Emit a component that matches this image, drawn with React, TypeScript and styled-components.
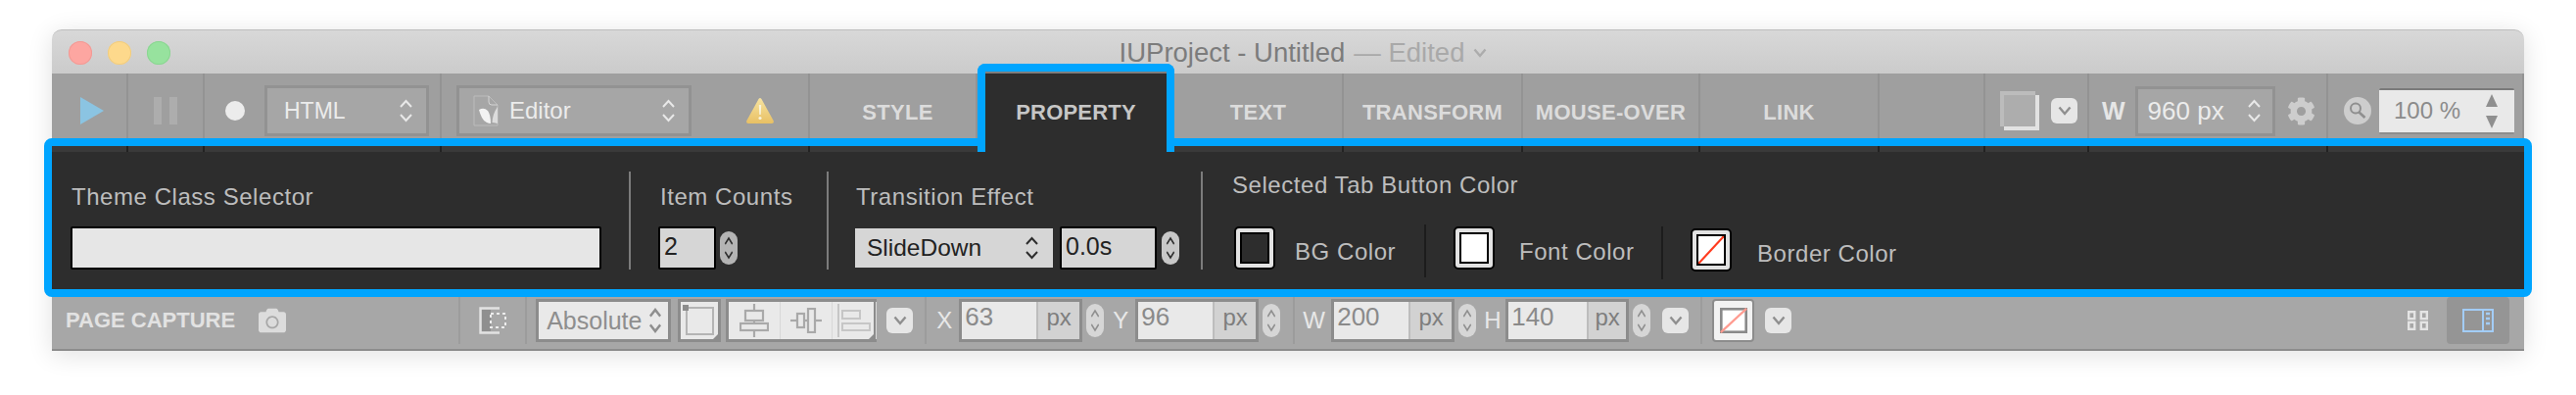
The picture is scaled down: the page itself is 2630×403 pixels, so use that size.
import React from "react";
import styled, { createGlobalStyle } from "styled-components";
import { FaCog, FaCamera } from "react-icons/fa";

const GlobalStyle = createGlobalStyle`
	html, body {
		margin: 0;
		background: #ffffff;
		font-family: "Liberation Sans", Arial, sans-serif;
	}
`;

const Page = styled.div`
	width: 2630px;
	height: 403px;
	overflow: hidden;
	box-sizing: border-box;
	padding: 30px 0 0 53px;
`;

const Window = styled.div`
	width: 2524px;
	height: 328px;
	border-radius: 10px 10px 0 0;
	box-shadow: 0 4px 26px rgba(0, 0, 0, 0.12);
`;

const TitleBar = styled.div`
	height: 45px;
	box-sizing: border-box;
	display: grid;
	grid-template-columns: 1fr auto 1fr;
	align-items: center;
	padding: 2px 0 0 17px;
	border-radius: 10px 10px 0 0;
	border-top: 1px solid #bdbdbd;
	background: linear-gradient(#d8d8d8, #cbcbcb);
`;

const Lights = styled.div`
	display: flex;
	gap: 16px;
`;

const Light = styled.div<{ $color: string; $edge: string }>`
	width: 24px;
	height: 24px;
	border-radius: 50%;
	background: ${(p) => p.$color};
	box-shadow: inset 0 0 0 1px ${(p) => p.$edge};
`;

const Title = styled.div`
	display: flex;
	align-items: center;
	margin-left: 14px;
	font-size: 27.5px;
	color: #7c7c7c;
	white-space: nowrap;
`;

const Edited = styled.span`
	color: #a9a9a9;
	margin-left: 9px;
`;

const TopBar = styled.div`
	height: 66px;
	display: flex;
	background: #9f9f9f;
`;

const Cell = styled.div<{ $w: number }>`
	width: ${(p) => p.$w}px;
	flex: none;
	height: 66px;
	box-sizing: border-box;
	display: flex;
	align-items: center;
	padding-top: 10px;
	border-right: 2px solid #939393;
`;

const CenterCell = styled(Cell)`
	justify-content: center;
`;

const Tab = styled(CenterCell)<{ $shift?: number }>`
	padding-top: 14px;
	padding-left: ${(p) => p.$shift ?? 0}px;
	font-size: 22px;
	font-weight: 700;
	letter-spacing: 0.3px;
	color: #dcdcdc;
`;

const ActiveTab = styled.div`
	position: relative;
	z-index: 2;
	flex: none;
	width: 201px;
	height: 90px;
	margin-top: -10px;
	box-sizing: border-box;
	display: flex;
	justify-content: center;
	padding-top: 29px;
	border: 8px solid #00a5ff;
	border-bottom: none;
	border-radius: 8px 8px 0 0;
	background: #2d2d2d;
	box-shadow: inset 0 2px 0 #7d7d7d;
	font-size: 22px;
	font-weight: 700;
	letter-spacing: 0.2px;
	color: #c6c6c6;
`;

const DarkSelect = styled.div<{ $w: number; $ml: number; $size?: number; $pad?: number }>`
	width: ${(p) => p.$w}px;
	height: 52px;
	margin-left: ${(p) => p.$ml}px;
	flex: none;
	box-sizing: border-box;
	display: flex;
	align-items: center;
	justify-content: space-between;
	padding: 0 13px 0 ${(p) => p.$pad ?? 17}px;
	border: 3px solid #929292;
	background: #a6a6a6;
	font-size: ${(p) => p.$size ?? 23}px;
	color: #ececec;
`;

const SelectName = styled.div`
	display: flex;
	align-items: center;
	gap: 11px;
`;

const WidthField = styled(DarkSelect)`
	height: 51px;
	padding: 0 11px 0 10px;
	font-size: 26px;
`;

const FieldLetter = styled.div<{ $ml: number }>`
	margin-left: ${(p) => p.$ml}px;
	font-size: 25px;
	font-weight: 700;
	color: #e6e6e6;
`;

const ChevronButton = styled.div<{ $ml: number }>`
	width: 27px;
	height: 26px;
	margin-left: ${(p) => p.$ml}px;
	flex: none;
	border-radius: 6px;
	background: #e6e6e6;
	display: flex;
	align-items: center;
	justify-content: center;
`;

const IconSlot = styled.div<{ $ml: number }>`
	margin-left: ${(p) => p.$ml}px;
	flex: none;
	display: flex;
	align-items: center;
`;

const ZoomField = styled.div`
	width: 138px;
	height: 47px;
	margin-left: 8px;
	flex: none;
	box-sizing: border-box;
	display: flex;
	align-items: center;
	justify-content: space-between;
	padding: 0 17px 0 15px;
	border-radius: 2px;
	border-top: 2px solid #7a7a7a;
	border-bottom: 2px solid #8d8d8d;
	background: #e9e9e9;
	font-size: 24px;
	color: #8b8b8b;
`;

const ZoomArrows = styled.div`
	display: flex;
	flex-direction: column;
	gap: 9px;
`;

const Panel = styled.div`
	margin: 0 -8px;
	height: 162px;
	box-sizing: border-box;
	border: 8px solid #00a5ff;
	border-radius: 8px;
	background: #2d2d2d;
`;

const Strip = styled.div`
	height: 6px;
	display: flex;
	background: #3a3a3a;
`;

const Tick = styled.div<{ $w: number }>`
	width: ${(p) => p.$w}px;
	flex: none;
	box-sizing: border-box;
	border-right: 2px solid #222222;
`;

const PanelBody = styled.div`
	display: flex;
	height: 100px;
	margin-top: 20px;
	padding-left: 19px;
`;

const Section = styled.div<{ $ml?: number; $w: number }>`
	width: ${(p) => p.$w}px;
	margin-left: ${(p) => p.$ml ?? 0}px;
	flex: none;
`;

const Label = styled.div<{ $ml?: number }>`
	height: 56px;
	line-height: 52px;
	margin-left: ${(p) => p.$ml ?? 1}px;
	font-size: 24px;
	letter-spacing: 0.55px;
	color: #bdbdbd;
	white-space: nowrap;
`;

const RaisedLabel = styled(Label)`
	line-height: 28px;
`;

const Divider = styled.div<{ $ml: number }>`
	width: 2px;
	height: 100px;
	margin-left: ${(p) => p.$ml}px;
	flex: none;
	background: #7c7c7c;
`;

const Controls = styled.div`
	display: flex;
	align-items: center;
	height: 44px;
`;

const TextField = styled.div<{ $w: number; $ml?: number }>`
	width: ${(p) => p.$w}px;
	height: 44px;
	margin-left: ${(p) => p.$ml ?? 0}px;
	flex: none;
	box-sizing: border-box;
	display: flex;
	align-items: center;
	padding: 0 0 4px 4px;
	border: 2px solid #000000;
	border-radius: 2px;
	background: #d6d6d6;
	font-size: 25px;
	color: #222222;
`;

const WideField = styled(TextField)`
	background: #e6e6e6;
`;

const LightSelect = styled.div`
	width: 202px;
	height: 40px;
	flex: none;
	box-sizing: border-box;
	display: flex;
	align-items: center;
	justify-content: space-between;
	padding: 0 14px 0 12px;
	background: #d6d6d6;
	font-size: 24.5px;
	color: #222222;
`;

const Stepper = styled.div<{ $ml: number; $bg: string }>`
	width: 18px;
	height: 34px;
	margin-left: ${(p) => p.$ml}px;
	flex: none;
	border-radius: 9px;
	background: ${(p) => p.$bg};
	display: flex;
	align-items: center;
	justify-content: center;
`;

const ColorRow = styled.div`
	display: flex;
	align-items: flex-start;
	margin-top: -2px;
`;

const Swatch = styled.div<{ $mt?: number; $ml?: number }>`
	width: 42px;
	height: 44px;
	margin-top: ${(p) => p.$mt ?? 2}px;
	margin-left: ${(p) => p.$ml ?? 0}px;
	flex: none;
	box-sizing: border-box;
	padding: 4px;
	border: 2px solid #000000;
	border-radius: 5px;
	background: #e2e2e2;
`;

const SwatchFill = styled.div<{ $fill: string }>`
	height: 100%;
	box-sizing: border-box;
	border: 2px solid #000000;
	background: ${(p) => p.$fill};
`;

const SwatchLabel = styled.div<{ $ml: number; $mt: number; $w: number }>`
	width: ${(p) => p.$w}px;
	margin-left: ${(p) => p.$ml}px;
	margin-top: ${(p) => p.$mt}px;
	flex: none;
	line-height: 30px;
	font-size: 24px;
	letter-spacing: 0.55px;
	color: #bdbdbd;
	white-space: nowrap;
`;

const DarkDivider = styled.div<{ $ml: number; $mt: number }>`
	width: 2px;
	height: 54px;
	margin-left: ${(p) => p.$ml}px;
	margin-top: ${(p) => p.$mt}px;
	flex: none;
	background: #1c1c1c;
`;

const BottomBar = styled.div`
	height: 55px;
	box-sizing: border-box;
	display: flex;
	align-items: flex-start;
	justify-content: space-between;
	border-bottom: 2px solid #8c8c8c;
	background: #a7a7a7;
`;

const BottomGroup = styled.div`
	height: 48px;
	display: flex;
	align-items: center;
`;

const ViewGroup = styled(BottomGroup)`
	padding-right: 15px;
`;

const PageCapture = styled.div`
	margin-left: 14px;
	font-size: 22px;
	font-weight: 700;
	color: #e2e2e2;
	white-space: nowrap;
`;

const BottomDivider = styled.div<{ $ml: number }>`
	width: 2px;
	height: 48px;
	margin-left: ${(p) => p.$ml}px;
	flex: none;
	background: #9c9c9c;
`;

const Box = styled.div<{ $w: number; $ml: number }>`
	width: ${(p) => p.$w}px;
	height: 44px;
	margin-left: ${(p) => p.$ml}px;
	flex: none;
	box-sizing: border-box;
	border: 3px solid #8c8c8c;
	background: #e9e9e9;
`;

const PositionSelect = styled(Box)`
	display: flex;
	align-items: center;
	justify-content: space-between;
	padding: 0 6px 0 8px;
	font-size: 25px;
	color: #8e8e8e;
`;

const CornerBox = styled(Box)`
	position: relative;

	&::after {
		content: "";
		position: absolute;
		right: -1px;
		bottom: -1px;
		border-style: solid;
		border-width: 0 0 7px 7px;
		border-color: transparent transparent #8c8c8c transparent;
	}
`;

const AlignGroup = styled(CornerBox)`
	display: flex;
`;

const AlignSegment = styled.div<{ $w: number }>`
	width: ${(p) => p.$w}px;
	flex: none;
	display: flex;
	align-items: center;
	justify-content: center;
	border-right: 1px solid #d8d8d8;
`;

const UnitField = styled(Box)`
	display: flex;
	font-size: 26px;
	color: #8a8a8a;
`;

const UnitValue = styled.div<{ $w: number }>`
	width: ${(p) => p.$w}px;
	flex: none;
	box-sizing: border-box;
	padding: 0 0 8px 3px;
	display: flex;
	align-items: center;
`;

const UnitSuffix = styled.div`
	flex: 1;
	display: flex;
	align-items: center;
	justify-content: center;
	padding-bottom: 6px;
	border-left: 2px solid #bdbdbd;
	background: #d2d2d2;
	font-size: 24px;
	color: #7e7e7e;
`;

const AxisLetter = styled.div<{ $ml: number; $w: number }>`
	width: ${(p) => p.$w}px;
	margin-left: ${(p) => p.$ml}px;
	flex: none;
	font-size: 24px;
	color: #e8e8e8;
	text-align: center;
`;

const ColorWell = styled.div`
	width: 43px;
	height: 44px;
	margin-left: 10px;
	flex: none;
	box-sizing: border-box;
	padding: 7px 5px 7px 6px;
	border: 2px solid #8c8c8c;
	border-radius: 4px;
	background: #f2f2f2;
`;

const ViewButton = styled.div`
	width: 64px;
	height: 48px;
	margin-left: 19px;
	border-radius: 4px;
	background: #959595;
	display: flex;
	align-items: center;
	justify-content: center;
`;

const DrawnBlock = styled.svg`
	display: block;
`;

const UpDown = ({ color, w = 15, h = 24, weight = 2 }: { color: string; w?: number; h?: number; weight?: number }) => (
	<svg width={w} height={h} viewBox="0 0 15 24" fill="none" stroke={color} strokeWidth={weight} preserveAspectRatio="none">
		<path d="M2 8 L7.5 2 L13 8" />
		<path d="M2 16 L7.5 22 L13 16" />
	</svg>
);

const ChevronDown = ({ color = "#8f8f8f" }: { color?: string }) => (
	<svg width="14" height="10" viewBox="0 0 14 10" fill="none" stroke={color} strokeWidth="2.4">
		<path d="M1.5 1.5 L7 8 L12.5 1.5" />
	</svg>
);

const PlayIcon = () => (
	<svg width="24" height="28" viewBox="0 0 24 28">
		<path d="M0 0 L24 14 L0 28 Z" fill="#8bc4e2" />
	</svg>
);

const PauseIcon = () => (
	<svg width="24" height="28" viewBox="0 0 24 28" fill="#adadad">
		<rect x="0" y="0" width="8" height="28" />
		<rect x="16" y="0" width="8" height="28" />
	</svg>
);

const RecordDot = () => (
	<svg width="20" height="20" viewBox="0 0 20 20">
		<circle cx="10" cy="10" r="10" fill="#ececec" />
	</svg>
);

const EditorIcon = () => (
	<svg width="26" height="32" viewBox="0 0 26 32">
		<path d="M1 1 H16 L25 10 V31 H1 Z" fill="none" stroke="#bcbcbc" strokeWidth="1" />
		<path d="M16 1 V7 Q16 10 19 10 H25" fill="none" stroke="#d4d4d4" strokeWidth="1" />
		<path d="M6 15 Q11 12 15 16 Q18 20 18 29 Q16 29 14 28 Q11 27 9 23 Q7 19 6 15 Z" fill="#f2f2f2" />
		<path d="M25 12 L25 29 Q21 28 19.5 28 Q20 19 25 12 Z" fill="#dcdcdc" />
	</svg>
);

const WarningIcon = () => (
	<svg width="28" height="26" viewBox="0 0 28 26">
		<defs>
			<linearGradient id="warn" x1="0" y1="0" x2="0" y2="1">
				<stop offset="0" stopColor="#f6e3a0" />
				<stop offset="1" stopColor="#e8c064" />
			</linearGradient>
		</defs>
		<path d="M14 0 C15 0 15.6 1 16 2 L27.6 23 C28.4 25 27.4 26 26 26 H2 C0.6 26 -0.4 25 0.4 23 L12 2 C12.4 1 13 0 14 0 Z" fill="url(#warn)" />
		<path d="M12.8 7 H15.2 L14.7 17 H13.3 Z" fill="#f8f3dc" />
		<circle cx="14" cy="20.5" r="1.6" fill="#f8f3dc" />
	</svg>
);

const PageSwatchIcon = () => (
	<svg width="40" height="40" viewBox="0 0 40 40">
		<rect x="4" y="4" width="36" height="36" fill="#e2e2e2" />
		<rect x="0" y="0" width="36" height="36" fill="#bcbcbc" />
		<rect x="4" y="4" width="32" height="32" fill="#adadad" />
	</svg>
);

const SearchBadge = () => (
	<svg width="28" height="28" viewBox="0 0 28 28">
		<circle cx="14" cy="14" r="14" fill="#cdcdcd" />
		<circle cx="12" cy="11.5" r="5" fill="none" stroke="#8f8f8f" strokeWidth="2" />
		<path d="M15.5 15.5 L21.5 21" stroke="#8f8f8f" strokeWidth="2.6" />
	</svg>
);

const TriangleUp = () => (
	<svg width="12" height="13" viewBox="0 0 12 13">
		<path d="M6 0 L12 13 H0 Z" fill="#8f8f8f" />
	</svg>
);

const TriangleDown = () => (
	<svg width="12" height="13" viewBox="0 0 12 13">
		<path d="M0 0 H12 L6 13 Z" fill="#8f8f8f" />
	</svg>
);

const MarqueeIcon = () => (
	<svg width="29" height="28" viewBox="0 0 29 28" fill="none">
		<path d="M21 1.5 H1.5 V26.5 H21" stroke="#e2e2e2" strokeWidth="2.4" />
		<rect x="3" y="3" width="9" height="22" fill="#8f8f8f" />
		<rect x="12" y="7" width="15" height="14" stroke="#ececec" strokeWidth="2" strokeDasharray="3 3" />
	</svg>
);

const PositionBoxIcon = () => (
	<DrawnBlock width="37" height="38" viewBox="0 0 37 38" fill="none">
		<rect x="6" y="6" width="27" height="27" stroke="#b4b4b4" strokeWidth="2" />
		<rect x="2" y="3" width="6" height="6" fill="#8c8c8c" />
	</DrawnBlock>
);

const AlignCenterH = () => (
	<svg width="30" height="34" viewBox="0 0 30 34" fill="none" stroke="#a9a9a9" strokeWidth="2.2">
		<path d="M15 0 V34" />
		<rect x="6" y="7" width="18" height="10" fill="#e9e9e9" />
		<rect x="1" y="20" width="28" height="7" fill="#e9e9e9" />
	</svg>
);

const AlignCenterV = () => (
	<svg width="32" height="26" viewBox="0 0 32 26" fill="none" stroke="#a9a9a9" strokeWidth="2.2">
		<path d="M0 13 H32" />
		<rect x="7" y="6" width="7" height="14" fill="#e9e9e9" />
		<rect x="18" y="1" width="7" height="24" fill="#e9e9e9" />
	</svg>
);

const AlignLeftIcon = () => (
	<svg width="34" height="34" viewBox="0 0 34 34" fill="none" stroke="#c6c6c6" strokeWidth="2">
		<path d="M1 0 V34" />
		<rect x="5" y="7" width="18" height="8" />
		<rect x="5" y="20" width="28" height="7" />
	</svg>
);

const NoColor = () => (
	<DrawnBlock width="100%" height="100%" viewBox="0 0 30 30" preserveAspectRatio="none">
		<path d="M0 30 L30 0" stroke="#ff3b1f" strokeWidth="2.4" />
	</DrawnBlock>
);

const WellIcon = () => (
	<DrawnBlock width="100%" height="100%" viewBox="0 0 32 30" preserveAspectRatio="none">
		<rect x="1.5" y="1.5" width="29" height="27" fill="#ffffff" stroke="#8a8a8a" strokeWidth="3" />
		<path d="M1 29 L31 1" stroke="#ff9b90" strokeWidth="2.6" />
	</DrawnBlock>
);

const GridIcon = () => (
	<svg width="21" height="20" viewBox="0 0 21 20" fill="none" stroke="#e4e4e4" strokeWidth="2.4">
		<rect x="1.2" y="1.2" width="6" height="7" />
		<rect x="13.8" y="1.2" width="6" height="7" />
		<rect x="1.2" y="11.8" width="6" height="7" />
		<rect x="13.8" y="11.8" width="6" height="7" />
	</svg>
);

const PanelIcon = () => (
	<svg width="32" height="24" viewBox="0 0 32 24" fill="none" stroke="#a3cdf7" strokeWidth="2">
		<rect x="1" y="1" width="30" height="22" />
		<path d="M21 1 V23" />
		<path d="M24 5 H28 M24 10 H28 M24 15 H28" strokeWidth="2.4" />
	</svg>
);

const TICKS = [78, 78, 242, 376, 545, 183, 181, 183, 108, 106, 244];

const DIMENSIONS = [
	{ letter: "X", ml: 10, lw: 16, gap: 7, value: "63", split: 76 },
	{ letter: "Y", ml: 9, lw: 16, gap: 7, value: "96", split: 76 },
	{ letter: "W", ml: 8, lw: 22, gap: 7, value: "200", split: 76, divider: true },
	{ letter: "H", ml: 8, lw: 16, gap: 6, value: "140", split: 80 },
];

const App = () => {
	return (
		<Page>
			<GlobalStyle />
			<Window>
				<TitleBar>
					<Lights>
						<Light $color="#fda6a1" $edge="#f29a95" />
						<Light $color="#fdd98c" $edge="#f0cc80" />
						<Light $color="#97e29e" $edge="#8bd592" />
					</Lights>
					<Title>
						IUProject - Untitled
						<Edited>— Edited</Edited>
						<IconSlot $ml={9}>
							<ChevronDown color="#acacac" />
						</IconSlot>
					</Title>
				</TitleBar>

				<TopBar>
					<Cell $w={78}>
						<IconSlot $ml={29}>
							<PlayIcon />
						</IconSlot>
					</Cell>
					<CenterCell $w={78}>
						<PauseIcon />
					</CenterCell>
					<Cell $w={242}>
						<IconSlot $ml={21}>
							<RecordDot />
						</IconSlot>
						<DarkSelect $w={168} $ml={20}>
							HTML
							<UpDown color="#e8e8e8" />
						</DarkSelect>
					</Cell>
					<Cell $w={376}>
						<DarkSelect $w={240} $ml={15} $size={24} $pad={14}>
							<SelectName>
								<EditorIcon />
								Editor
							</SelectName>
							<UpDown color="#e8e8e8" />
						</DarkSelect>
						<IconSlot $ml={56}>
							<WarningIcon />
						</IconSlot>
					</Cell>
					<Tab $w={171} $shift={10}>STYLE</Tab>
					<ActiveTab>PROPERTY</ActiveTab>
					<Tab $w={173}>TEXT</Tab>
					<Tab $w={183}>TRANSFORM</Tab>
					<Tab $w={181}>MOUSE-OVER</Tab>
					<Tab $w={183}>LINK</Tab>
					<Cell $w={108} />
					<Cell $w={106}>
						<IconSlot $ml={15}>
							<PageSwatchIcon />
						</IconSlot>
						<ChevronButton $ml={12}>
							<ChevronDown />
						</ChevronButton>
					</Cell>
					<Cell $w={244}>
						<FieldLetter $ml={13}>W</FieldLetter>
						<WidthField $w={143} $ml={10}>
							960 px
							<UpDown color="#e8e8e8" />
						</WidthField>
						<IconSlot $ml={12}>
							<FaCog size={29} color="#cdcdcd" />
						</IconSlot>
					</Cell>
					<Cell $w={200}>
						<IconSlot $ml={16}>
							<SearchBadge />
						</IconSlot>
						<ZoomField>
							100 %
							<ZoomArrows>
								<TriangleUp />
								<TriangleDown />
							</ZoomArrows>
						</ZoomField>
					</Cell>
				</TopBar>

				<Panel>
					<Strip>
						{TICKS.map((w, i) => (
							<Tick key={i} $w={w} />
						))}
					</Strip>
					<PanelBody>
						<Section $w={542}>
							<Label>Theme Class Selector</Label>
							<WideField $w={542} />
						</Section>
						<Divider $ml={28} />
						<Section $ml={28} $w={140}>
							<Label $ml={2}>Item Counts</Label>
							<Controls>
								<TextField $w={59}>2</TextField>
								<Stepper $ml={4} $bg="#b4b4b4">
									<UpDown color="#2d2d2d" w={10} h={24} />
								</Stepper>
							</Controls>
						</Section>
						<Divider $ml={32} />
						<Section $ml={27} $w={332}>
							<Label $ml={1}>Transition Effect</Label>
							<Controls>
								<LightSelect>
									SlideDown
									<UpDown color="#2d2d2d" />
								</LightSelect>
								<TextField $w={99} $ml={7}>0.0s</TextField>
								<Stepper $ml={5} $bg="#c8c8c8">
									<UpDown color="#2d2d2d" w={10} h={24} />
								</Stepper>
							</Controls>
						</Section>
						<Divider $ml={21} />
						<Section $ml={30} $w={700}>
							<RaisedLabel $ml={0}>Selected Tab Button Color</RaisedLabel>
							<ColorRow>
								<Swatch $ml={2}>
									<SwatchFill $fill="#2d2d2d" />
								</Swatch>
								<SwatchLabel $ml={20} $mt={13} $w={102}>BG Color</SwatchLabel>
								<DarkDivider $ml={30} $mt={0} />
								<Swatch $ml={28}>
									<SwatchFill $fill="#ffffff" />
								</Swatch>
								<SwatchLabel $ml={25} $mt={13} $w={119}>Font Color</SwatchLabel>
								<DarkDivider $ml={26} $mt={2} />
								<Swatch $ml={28} $mt={4}>
									<SwatchFill $fill="#ffffff">
										<NoColor />
									</SwatchFill>
								</Swatch>
								<SwatchLabel $ml={26} $mt={15} $w={146}>Border Color</SwatchLabel>
							</ColorRow>
						</Section>
					</PanelBody>
				</Panel>

				<BottomBar>
					<BottomGroup>
						<PageCapture>PAGE CAPTURE</PageCapture>
						<IconSlot $ml={24}>
							<FaCamera size={28} color="#dcdcdc" />
						</IconSlot>
						<BottomDivider $ml={176} />
						<IconSlot $ml={19}>
							<MarqueeIcon />
						</IconSlot>
						<BottomDivider $ml={18} />
						<PositionSelect $w={138} $ml={9}>
							Absolute
							<UpDown color="#8e8e8e" w={14} h={26} weight={2.6} />
						</PositionSelect>
						<CornerBox $w={44} $ml={7}>
							<PositionBoxIcon />
						</CornerBox>
						<AlignGroup $w={154} $ml={5}>
							<AlignSegment $w={52}>
								<AlignCenterH />
							</AlignSegment>
							<AlignSegment $w={52}>
								<AlignCenterV />
							</AlignSegment>
							<AlignSegment $w={44}>
								<AlignLeftIcon />
							</AlignSegment>
						</AlignGroup>
						<ChevronButton $ml={10}>
							<ChevronDown />
						</ChevronButton>
						<BottomDivider $ml={12} />
						{DIMENSIONS.map((d) => (
							<React.Fragment key={d.letter}>
								{d.divider && <BottomDivider $ml={13} />}
								<AxisLetter $ml={d.ml} $w={d.lw}>{d.letter}</AxisLetter>
								<UnitField $w={126} $ml={d.gap}>
									<UnitValue $w={d.split}>{d.value}</UnitValue>
									<UnitSuffix>px</UnitSuffix>
								</UnitField>
								<Stepper $ml={4} $bg="#d6d6d6">
									<UpDown color="#8f8f8f" w={10} h={24} />
								</Stepper>
							</React.Fragment>
						))}
						<ChevronButton $ml={12}>
							<ChevronDown />
						</ChevronButton>
						<BottomDivider $ml={12} />
						<ColorWell>
							<WellIcon />
						</ColorWell>
						<ChevronButton $ml={11}>
							<ChevronDown />
						</ChevronButton>
					</BottomGroup>
					<ViewGroup>
						<GridIcon />
						<ViewButton>
							<PanelIcon />
						</ViewButton>
					</ViewGroup>
				</BottomBar>
			</Window>
		</Page>
	);
};

export default App;
